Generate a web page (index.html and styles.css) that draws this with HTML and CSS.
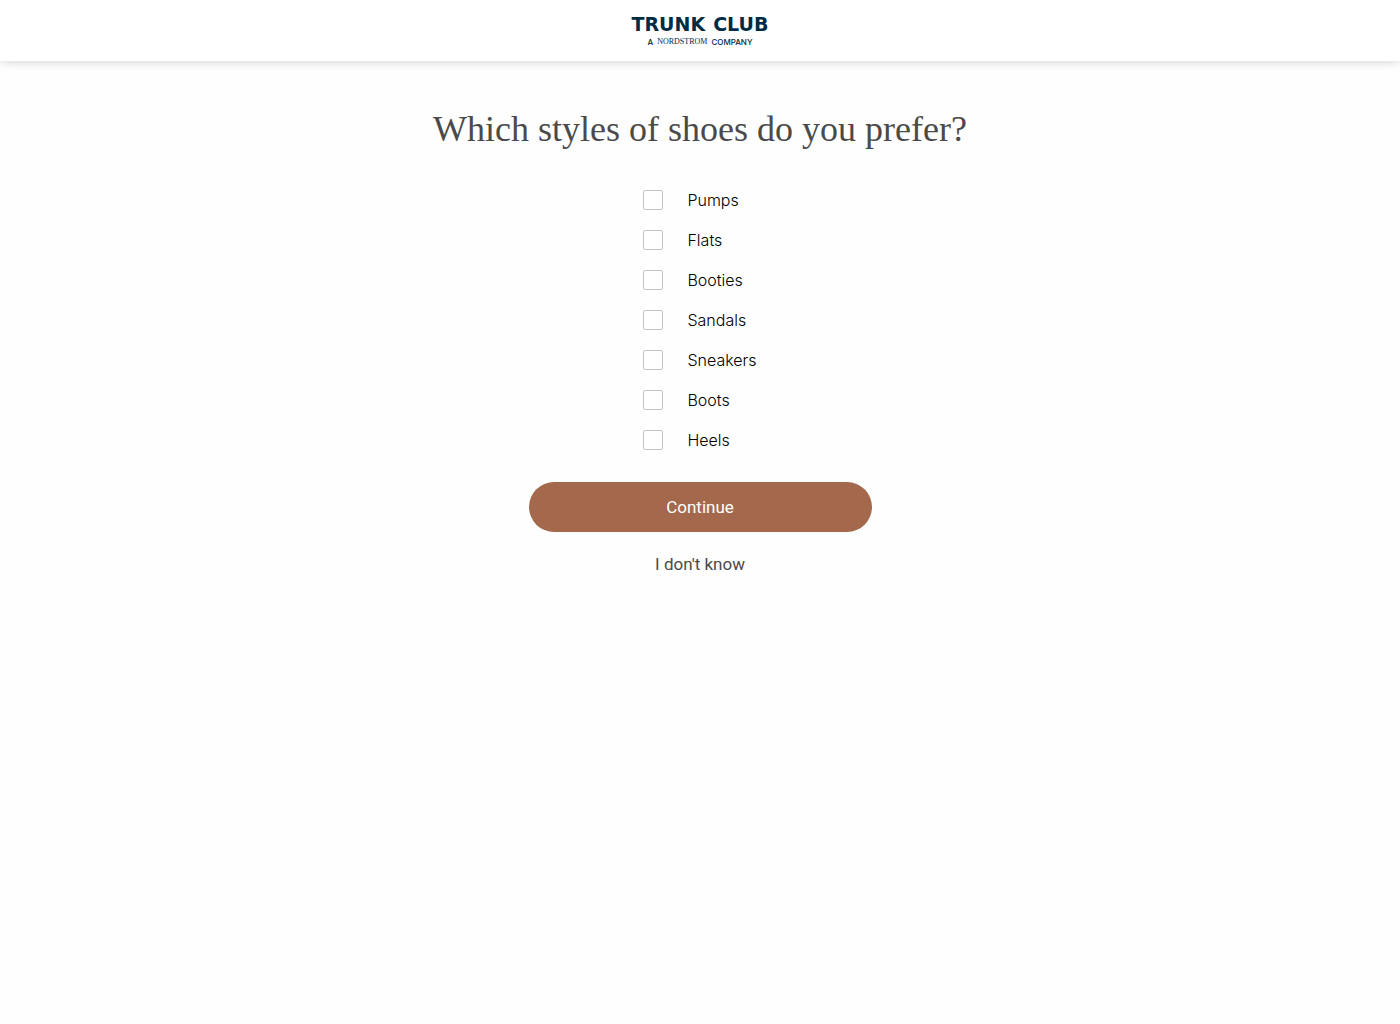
FILE: index.html
```html
<!DOCTYPE html>
<html lang="en">
<head>
<meta charset="utf-8">
<meta name="viewport" content="width=device-width, initial-scale=1">
<title>Trunk Club</title>
<link rel="stylesheet" href="styles.css">
</head>
<body>
<header class="header">
  <div class="logo">
    <span class="logo-name"><span>TRUNK</span><span>CLUB</span></span>
    <span class="logo-tagline"><span>A</span><span class="logo-parent">NORDSTROM</span><span>COMPANY</span></span>
  </div>
</header>
<main class="main">
  <h1 class="title">Which styles of shoes do you prefer?</h1>
  <form class="form">
    <div class="options">
      <label class="option"><input class="checkbox" type="checkbox" name="style" value="pumps">Pumps</label>
      <label class="option"><input class="checkbox" type="checkbox" name="style" value="flats">Flats</label>
      <label class="option"><input class="checkbox" type="checkbox" name="style" value="booties">Booties</label>
      <label class="option"><input class="checkbox" type="checkbox" name="style" value="sandals">Sandals</label>
      <label class="option"><input class="checkbox" type="checkbox" name="style" value="sneakers">Sneakers</label>
      <label class="option"><input class="checkbox" type="checkbox" name="style" value="boots">Boots</label>
      <label class="option"><input class="checkbox" type="checkbox" name="style" value="heels">Heels</label>
    </div>
    <button class="button button-primary" type="submit">Continue</button>
    <button class="button button-plain" type="button">I don't know</button>
  </form>
</main>
</body>
</html>
```
FILE: styles.css
```css
* {
  box-sizing: border-box;
}

body {
  margin: 0;
  background: #fefefe;
  color: #4a4a4a;
  font-family: Inter, sans-serif;
}

.header {
  display: flex;
  justify-content: center;
  padding: 12px 16px 13px;
  background: #fff;
  box-shadow: 0 0 10px rgba(0, 0, 0, 0.2);
}

.logo {
  display: flex;
  flex-direction: column;
  align-items: center;
  color: #002b45;
  font-weight: 700;
}

.logo-name {
  display: flex;
  gap: 8px;
  font-family: "DejaVu Sans", sans-serif;
  font-size: 19px;
  line-height: 24px;
}

.logo-tagline {
  display: flex;
  gap: 4px;
  font-size: 8px;
  font-weight: 500;
  line-height: 12px;
}

.logo-parent {
  font-family: "Liberation Serif", serif;
  font-weight: 400;
}

.main {
  display: flex;
  flex-direction: column;
  align-items: center;
  padding: 44px 16px;
}

.title {
  margin: 0 0 27px;
  font-family: "Liberation Serif", serif;
  font-size: 36px;
  font-weight: 400;
  line-height: 48px;
  text-align: center;
}

.form {
  display: flex;
  flex-direction: column;
  align-items: center;
  width: 100%;
  max-width: 343px;
}

.options {
  display: flex;
  flex-direction: column;
}

.option {
  display: flex;
  align-items: center;
  gap: 24px;
  height: 40px;
  color: #000;
  font-size: 16px;
  font-weight: 300;
}

.checkbox {
  appearance: none;
  width: 20px;
  height: 20px;
  margin: 0;
  border: 1px solid #c4c4c4;
  border-radius: 2px;
  background: #fff;
}

.checkbox:checked {
  background: #a4694c;
}

.button {
  width: 100%;
  border: 0;
  border-radius: 25px;
  font-family: Roboto, sans-serif;
  font-size: 17px;
  cursor: pointer;
}

.button-primary {
  height: 50px;
  margin-top: 22px;
  background: #a4694c;
  color: #fff;
}

.button-plain {
  height: 48px;
  margin-top: 8px;
  background: transparent;
  color: #4a4a4a;
}
```
